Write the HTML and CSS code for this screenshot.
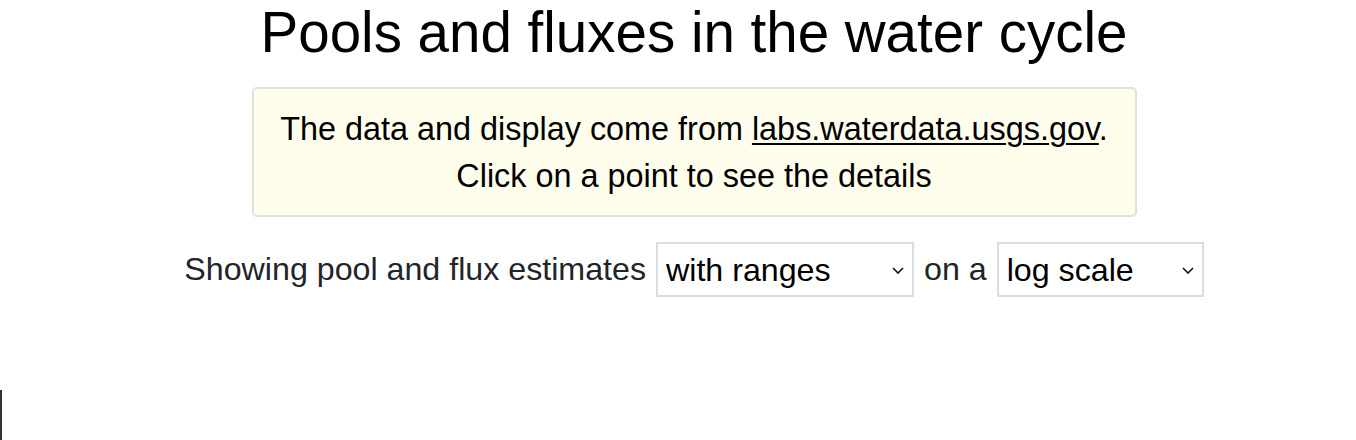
FILE: index.html
```html
<!DOCTYPE html>
<html lang="en">
<head>
<meta charset="utf-8">
<title>Pools and fluxes in the water cycle</title>
<link rel="stylesheet" href="styles.css">
</head>
<body>
<main class="page">
  <h1 class="title">Pools and fluxes in the water cycle</h1>
  <div class="notice">
    <p>The data and display come from <a href="#">labs.waterdata.usgs.gov</a>.</p>
    <p>Click on a point to see the details</p>
  </div>
  <div class="controls">
    <span>Showing pool and flux estimates</span>
    <span class="sel sel-wide">
      <select><option>with ranges</option><option>without ranges</option></select>
      <svg class="chev" viewBox="0 0 12 7" width="12" height="7"><path d="M1 1 L6 6 L11 1" fill="none" stroke="#111" stroke-width="1.6"/></svg>
    </span>
    <span>on a</span>
    <span class="sel sel-narrow">
      <select><option>log scale</option><option>linear scale</option></select>
      <svg class="chev" viewBox="0 0 12 7" width="12" height="7"><path d="M1 1 L6 6 L11 1" fill="none" stroke="#111" stroke-width="1.6"/></svg>
    </span>
  </div>
</main>
<div class="chart"><div class="axis"></div></div>
</body>
</html>
```
FILE: styles.css
```css
html, body { margin: 0; padding: 0; background: #fff; }
body { font-family: "Liberation Sans", Arial, sans-serif; color: #000; }
.page { display: flex; flex-direction: column; align-items: center; padding-left: 32px; }
.title { font-size: 56.5px; font-weight: 400; margin: 1px 0 0; line-height: 64px; }
.notice {
  margin-top: 22px;
  width: 885px; box-sizing: border-box;
  background: #fffeed; border: 2px solid #e2e2dc; border-radius: 5px;
  padding: 17px 0 15px; text-align: center;
}
.notice p { margin: 0; font-size: 32.4px; line-height: 47px; }
.notice a { color: #000; text-decoration: underline; text-decoration-thickness: 2px; text-underline-offset: 3px; }
.controls {
  margin-top: 25px; display: flex; align-items: center; gap: 10px;
  font-size: 32.2px; color: #212529;
}
.sel { position: relative; display: inline-flex; }
.sel select {
  appearance: none; -webkit-appearance: none;
  font-family: inherit; font-size: 32.2px; color: #000;
  background: #fff; border: 2px solid #dcdcdc; border-radius: 0;
  height: 55px; padding: 0 0 0 8px; margin: 0;
}
.sel-wide select { width: 258px; }
.sel-narrow select { width: 207px; }
.chev { position: absolute; right: 10px; top: 25px; pointer-events: none; }
.chart { height: 144px; position: relative; }
.axis { position: absolute; left: 0; top: 93px; width: 2px; height: 60px; background: #333; }
```
